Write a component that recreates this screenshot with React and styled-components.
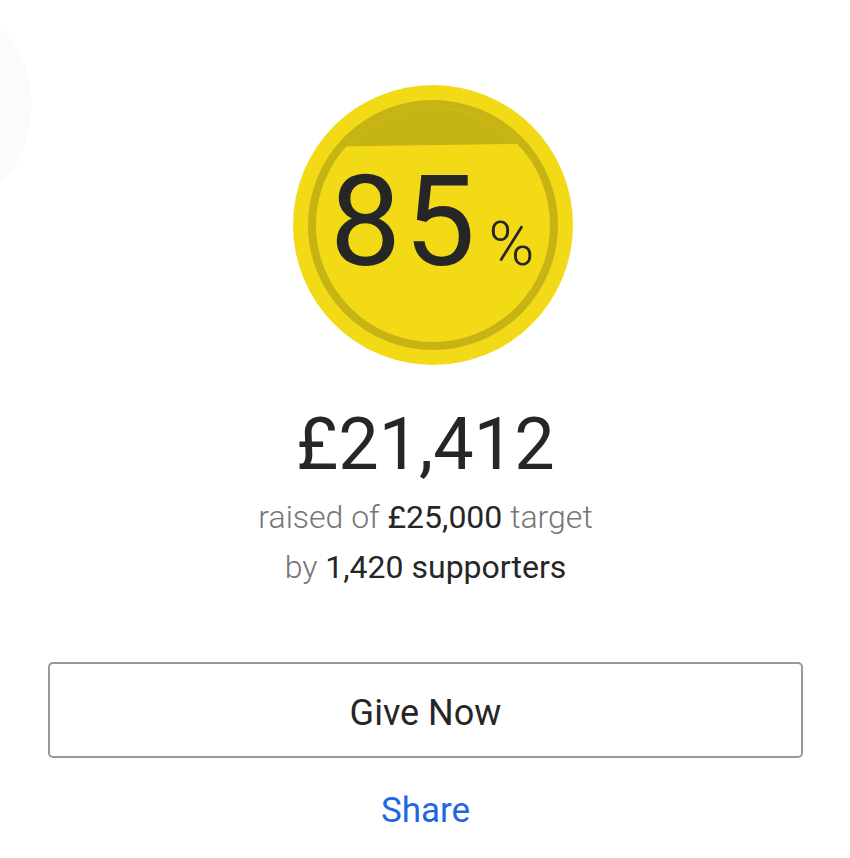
import React from "react";
import styled, { createGlobalStyle } from "styled-components";

const Global = createGlobalStyle`
  html, body { margin: 0; padding: 0; background: #ffffff; }
  body { font-family: Roboto, "Liberation Sans", Arial, sans-serif; color: #262626; }
`;

const Page = styled.div`
  position: relative;
  width: 850px;
  min-height: 858px;
  overflow: hidden;
  padding: 85px 47px 0 48px;
  box-sizing: border-box;
  display: flex;
  flex-direction: column;
  align-items: center;
`;

const Blob = styled.div`
  position: absolute;
  left: -70px;
  top: 22px;
  width: 101px;
  height: 166px;
  border-radius: 50%;
  background: #fbfbfb;
`;

const Gauge = styled.div`
  width: 280px;
  height: 280px;
  border-radius: 50%;
  background: #f2da16;
  display: flex;
  align-items: center;
  justify-content: center;
  margin-left: 15px;
`;

const Ring = styled.div`
  position: relative;
  width: 250px;
  height: 250px;
  box-sizing: border-box;
  border-radius: 50%;
  border: 8px solid #c6b314;
  overflow: hidden;
  display: flex;
  align-items: center;
  justify-content: center;
`;

const Empty = styled.div`
  position: absolute;
  left: -20px;
  right: -20px;
  top: -10px;
  height: ${(p) => p.$h}px;
  background: #c6b314;
  transform: rotate(-0.8deg);
`;

const Percent = styled.div`
  position: relative;
  display: flex;
  align-items: baseline;
  padding-bottom: 8px;
  margin-left: -2px;
`;

const Big = styled.span`
  font-size: 127px;
  line-height: 1;
  letter-spacing: 3px;
  font-weight: 400;
  color: #262626;
`;

const Sign = styled.span`
  font-size: 62px;
  line-height: 1;
  font-weight: 300;
  margin-left: 10px;
  color: #262626;
`;

const Amount = styled.div`
  margin-top: 44px;
  font-size: 72px;
  line-height: 72px;
  font-weight: 400;
  color: #262626;
`;

const Stats = styled.div`
  margin-top: 11px;
  display: flex;
  flex-direction: column;
  align-items: center;
`;

const StatLine = styled.div`
  font-size: 32px;
  line-height: 50px;
  font-weight: 300;
  color: #767676;
  white-space: nowrap;
`;

const Strong = styled.span`
  font-weight: 400;
  color: #262626;
`;

const GiveButton = styled.button`
  margin-top: 70px;
  width: 100%;
  height: 96px;
  box-sizing: border-box;
  border: 2px solid #999999;
  border-radius: 5px;
  background: #ffffff;
  font-family: Roboto, "Liberation Sans", Arial, sans-serif;
  font-size: 36px;
  font-weight: 400;
  color: #262626;
  padding-top: 7px;
  cursor: pointer;
`;

const ShareLink = styled.a`
  margin-top: 33px;
  font-size: 35px;
  line-height: 40px;
  color: #1f67de;
  text-decoration: none;
`;

export default function App() {
  return (
    <>
      <Global />
      <Page>
        <Blob />
        <Gauge>
          <Ring>
            <Empty $h={47} />
            <Percent>
              <Big>85</Big>
              <Sign>%</Sign>
            </Percent>
          </Ring>
        </Gauge>
        <Amount>£21,412</Amount>
        <Stats>
          <StatLine>
            raised of <Strong>£25,000</Strong> target
          </StatLine>
          <StatLine>
            by <Strong>1,420 supporters</Strong>
          </StatLine>
        </Stats>
        <GiveButton>Give Now</GiveButton>
        <ShareLink href="#">Share</ShareLink>
      </Page>
    </>
  );
}
